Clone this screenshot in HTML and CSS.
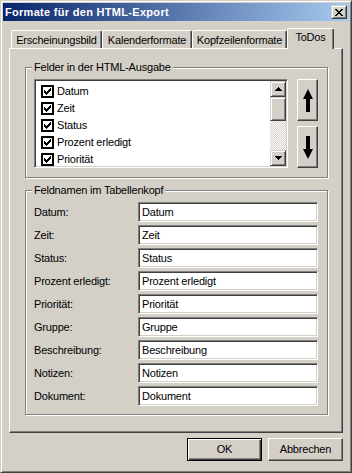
FILE: index.html
```html
<!DOCTYPE html>
<html lang="de">
<head>
  <meta charset="UTF-8" />
  <title>Formate für den HTML-Export</title>
  <link rel="stylesheet" href="styles.css">
</head>
<body>

<svg width="0" height="0" class="defs">
  <symbol id="check" viewBox="0 0 13 13">
    <rect x="1" y="1" width="11" height="11" fill="#fff" stroke="#000" stroke-width="2"/>
    <path d="M9 3h1v1h-1z M8 4h2v1h-2z M3 5h1v1h-1z M7 5h3v1h-3z M3 6h2v1h-2z M6 6h3v1h-3z M3 7h5v1h-5z M4 8h3v1h-3z M5 9h1v1h-1z" fill="#000"/>
  </symbol>
</svg>

<div class="window">
  <div class="titlebar">
    <span class="title">Formate für den HTML-Export</span>
    <button class="close-btn raised">
      <svg width="8" height="7" viewBox="0 0 8 7"><path d="M0 0h2v1h-2z M6 0h2v1h-2z M1 1h2v1h-2z M5 1h2v1h-2z M2 2h4v1h-4z M3 3h2v1h-2z M2 4h4v1h-4z M1 5h2v1h-2z M5 5h2v1h-2z M0 6h2v1h-2z M6 6h2v1h-2z" fill="#000"/></svg>
    </button>
  </div>

  <div class="content">
    <div class="tabs">
      <div class="tab tab-look">Erscheinungsbild</div>
      <div class="tab tab-calendar">Kalenderformate</div>
      <div class="tab tab-header">Kopfzeilenformate</div>
      <div class="tab tab-todo active">ToDos</div>
    </div>

    <div class="panel">
      <div class="group group-fields">
        <div class="group-title">Felder in der HTML-Ausgabe</div>
        <div class="fields-row">
          <div class="listbox sunken">
            <ul class="list">
              <li><svg class="cb"><use href="#check"/></svg>Datum</li>
              <li><svg class="cb"><use href="#check"/></svg>Zeit</li>
              <li><svg class="cb"><use href="#check"/></svg>Status</li>
              <li><svg class="cb"><use href="#check"/></svg>Prozent erledigt</li>
              <li><svg class="cb"><use href="#check"/></svg>Priorität</li>
            </ul>
            <div class="scrollbar">
              <div class="scroll-btn raised">
                <svg width="7" height="4" viewBox="0 0 7 4"><path d="M3 0h1v1h-1z M2 1h3v1h-3z M1 2h5v1h-5z M0 3h7v1h-7z" fill="#000"/></svg>
              </div>
              <div class="thumb raised"></div>
              <div class="track"></div>
              <div class="scroll-btn raised">
                <svg width="7" height="4" viewBox="0 0 7 4"><path d="M0 0h7v1h-7z M1 1h5v1h-5z M2 2h3v1h-3z M3 3h1v1h-1z" fill="#000"/></svg>
              </div>
            </div>
          </div>
          <div class="move-buttons">
            <button class="btn move-btn">
              <svg width="10" height="23" viewBox="0 0 10 23"><path d="M5 0L10 10H7V23H3V10H0Z" fill="#000"/></svg>
            </button>
            <button class="btn move-btn">
              <svg width="10" height="23" viewBox="0 0 10 23"><path d="M3 0H7V13H10L5 23L0 13H3Z" fill="#000"/></svg>
            </button>
          </div>
        </div>
      </div>

      <div class="group group-names">
        <div class="group-title">Feldnamen im Tabellenkopf</div>
        <div class="name-grid">
          <label>Datum:</label>
          <input class="field sunken" type="text" value="Datum">
          <label>Zeit:</label>
          <input class="field sunken" type="text" value="Zeit">
          <label>Status:</label>
          <input class="field sunken" type="text" value="Status">
          <label>Prozent erledigt:</label>
          <input class="field sunken" type="text" value="Prozent erledigt">
          <label>Priorität:</label>
          <input class="field sunken" type="text" value="Priorität">
          <label>Gruppe:</label>
          <input class="field sunken" type="text" value="Gruppe">
          <label>Beschreibung:</label>
          <input class="field sunken" type="text" value="Beschreibung">
          <label>Notizen:</label>
          <input class="field sunken" type="text" value="Notizen">
          <label>Dokument:</label>
          <input class="field sunken" type="text" value="Dokument">
        </div>
      </div>
    </div>

    <div class="actions">
      <button class="btn push default">OK</button>
      <button class="btn push">Abbrechen</button>
    </div>
  </div>
</div>

</body>
</html>
```

FILE: styles.css
```css
* {
  box-sizing: border-box;
}

body {
  margin: 0;
  background: #d4d0c8;
  font-family: "Liberation Sans", Arial, sans-serif;
  font-size: 11px;
  line-height: 13px;
  letter-spacing: -0.2px;
  color: #000;
}

.defs {
  display: block;
  width: 0;
  height: 0;
}

button,
input {
  font: inherit;
  color: inherit;
  letter-spacing: inherit;
  margin: 0;
}

/* window frame */
.window {
  width: 352px;
  height: 473px;
  padding: 2px;
  background: #d4d0c8;
  border: 1px solid;
  border-color: #d4d0c8 #404040 #404040 #d4d0c8;
  box-shadow: inset 1px 1px #fff, inset -1px -1px #808080;
}

.titlebar {
  height: 18px;
  display: flex;
  align-items: center;
  justify-content: space-between;
  padding: 0 2px;
  background: linear-gradient(to right, #0a246a, #a6caf0);
}

.title {
  color: #fff;
  font-weight: bold;
  letter-spacing: 0.3px;
  padding-top: 1px;
}

/* classic 3d edges */
.raised {
  background: #d4d0c8;
  border: 1px solid;
  border-color: #d4d0c8 #404040 #404040 #d4d0c8;
  box-shadow: inset 1px 1px #fff, inset -1px -1px #808080;
}

.sunken {
  background: #fff;
  border: 1px solid;
  border-color: #808080 #fff #fff #808080;
  box-shadow: inset 1px 1px #404040, inset -1px -1px #d4d0c8;
}

.btn {
  background: #d4d0c8;
  padding: 0;
  border: 1px solid;
  border-color: #fff #404040 #404040 #fff;
  box-shadow: inset -1px -1px #808080;
  display: flex;
  align-items: center;
  justify-content: center;
}

.close-btn {
  width: 16px;
  height: 14px;
  padding: 0;
  display: flex;
  align-items: center;
  justify-content: center;
}

.content {
  padding: 7px 6px 0 6px;
}

/* tabs */
.tabs {
  display: flex;
  align-items: flex-end;
  height: 20px;
  padding-left: 2px;
}

.tab {
  height: 18px;
  padding-top: 3px;
  text-align: center;
  white-space: nowrap;
  border: 1px solid;
  border-bottom: none;
  border-color: #fff #404040 #404040 #fff;
  border-radius: 2px 2px 0 0;
  box-shadow: inset -1px 0 #808080;
}

.tab-look { width: 91px; }
.tab-calendar { width: 90px; }
.tab-header { width: 95px; }

.tab.active {
  width: 47px;
  height: 21px;
  padding-top: 2px;
  margin-bottom: -1px;
  background: #d4d0c8;
  position: relative;
  z-index: 1;
}

.panel {
  height: 385px;
  padding: 18px 14px 0 15px;
  border: 1px solid;
  border-color: #fff #404040 #404040 #fff;
  box-shadow: inset -1px -1px #808080;
}

/* group boxes */
.group {
  border: 1px solid #808080;
  box-shadow: inset 1px 1px #fff, 1px 1px #fff;
  padding: 0 9px 9px 8px;
}

.group + .group {
  margin-top: 12px;
}

.group-names {
  padding-bottom: 8px;
}

.group-title {
  width: fit-content;
  margin: -7px 0 5px -2px;
  padding: 0 2px;
  background: #d4d0c8;
  white-space: nowrap;
}

.fields-row {
  display: flex;
  gap: 9px;
}

.listbox {
  width: 254px;
  height: 89px;
  display: flex;
  padding: 1px;
}

.list {
  flex: 1;
  list-style: none;
  margin: 0;
  padding: 2px 0 0 0;
  overflow: hidden;
}

.list li {
  height: 17px;
  display: flex;
  align-items: center;
  padding-left: 5px;
  white-space: nowrap;
}

.cb {
  width: 13px;
  height: 13px;
  margin-right: 3px;
  flex: none;
}

.scrollbar {
  width: 16px;
  display: flex;
  flex-direction: column;
}

.scroll-btn {
  height: 16px;
  display: flex;
  align-items: center;
  justify-content: center;
}

.thumb {
  height: 24px;
}

.track {
  flex: 1;
  background: repeating-conic-gradient(#fff 0 25%, #d4d0c8 0 50%) 0 0 / 2px 2px;
}

.move-buttons {
  display: flex;
  flex-direction: column;
  gap: 5px;
}

.move-btn {
  width: 21px;
  height: 42px;
}

/* field names */
.name-grid {
  display: grid;
  grid-template-columns: 104px 180px;
  grid-auto-rows: 20px;
  row-gap: 3px;
  align-items: center;
}

.field {
  height: 20px;
  width: 180px;
  padding: 0 2px 0 3px;
  outline: none;
}

/* dialog buttons */
.actions {
  display: flex;
  justify-content: flex-end;
  gap: 6px;
  margin-top: 5px;
}

.push {
  width: 75px;
  height: 23px;
}

.push.default {
  border-color: #000;
  box-shadow: inset 1px 1px #fff, inset -1px -1px #404040, inset -2px -2px #808080;
}
```
